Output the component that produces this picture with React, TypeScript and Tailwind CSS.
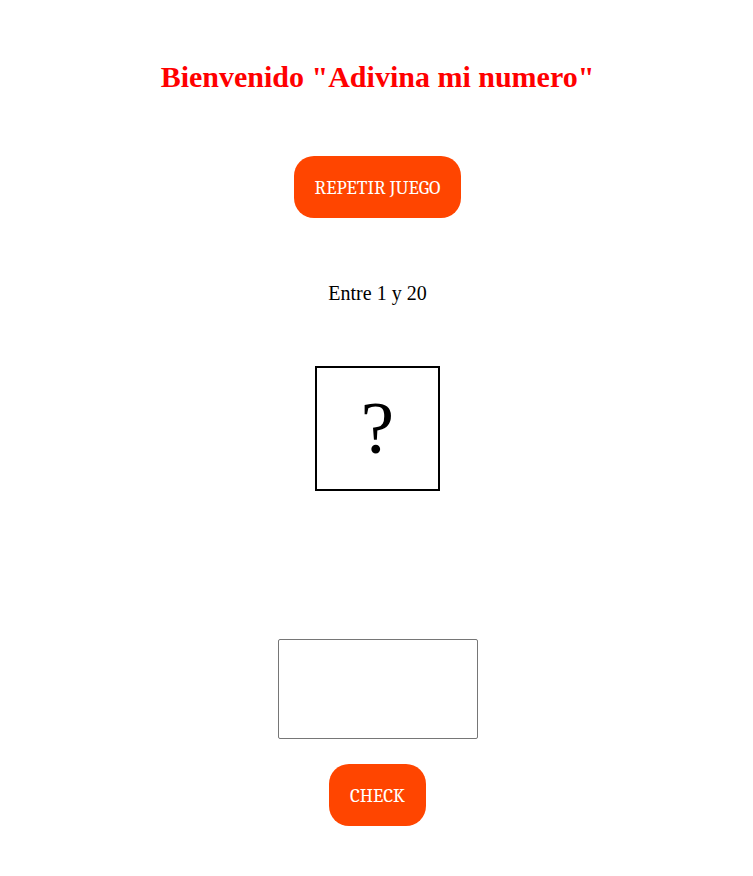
import { useState } from "react";

const buttonStyle =
  "h-[62px] cursor-pointer rounded-[20px] bg-[#ff4500] px-[21px] pt-0.5 font-['Cambria','Caladea','Liberation_Serif',serif] text-[19px] text-white";

export default function App() {
  const [guess, setGuess] = useState("");

  return (
    <main className="flex flex-col items-center pt-[60px] pr-4 pb-[50px] pl-[18px] font-['Liberation_Serif',serif] text-black">
      <h1 className="text-center text-[30px] leading-[34px] font-bold text-[#ff0000]">
        Bienvenido "Adivina mi numero"
      </h1>
      <button type="button" className={`mt-[62px] ${buttonStyle}`} onClick={() => setGuess("")}>
        REPETIR JUEGO
      </button>
      <p className="mt-16 text-xl leading-[22px]">Entre 1 y 20</p>
      <div className="mt-[62px] flex size-[125px] items-center justify-center border-2 border-black pb-0.5 text-[75px] leading-none">
        ?
      </div>
      <input
        type="text"
        aria-label="Numero"
        value={guess}
        onChange={(event) => setGuess(event.target.value)}
        className="mt-[148px] h-[100px] w-[200px] rounded-xs border border-[#767676] bg-white text-center text-[40px]"
      />
      <button type="button" className={`mt-[25px] ${buttonStyle}`}>
        CHECK
      </button>
    </main>
  );
}
